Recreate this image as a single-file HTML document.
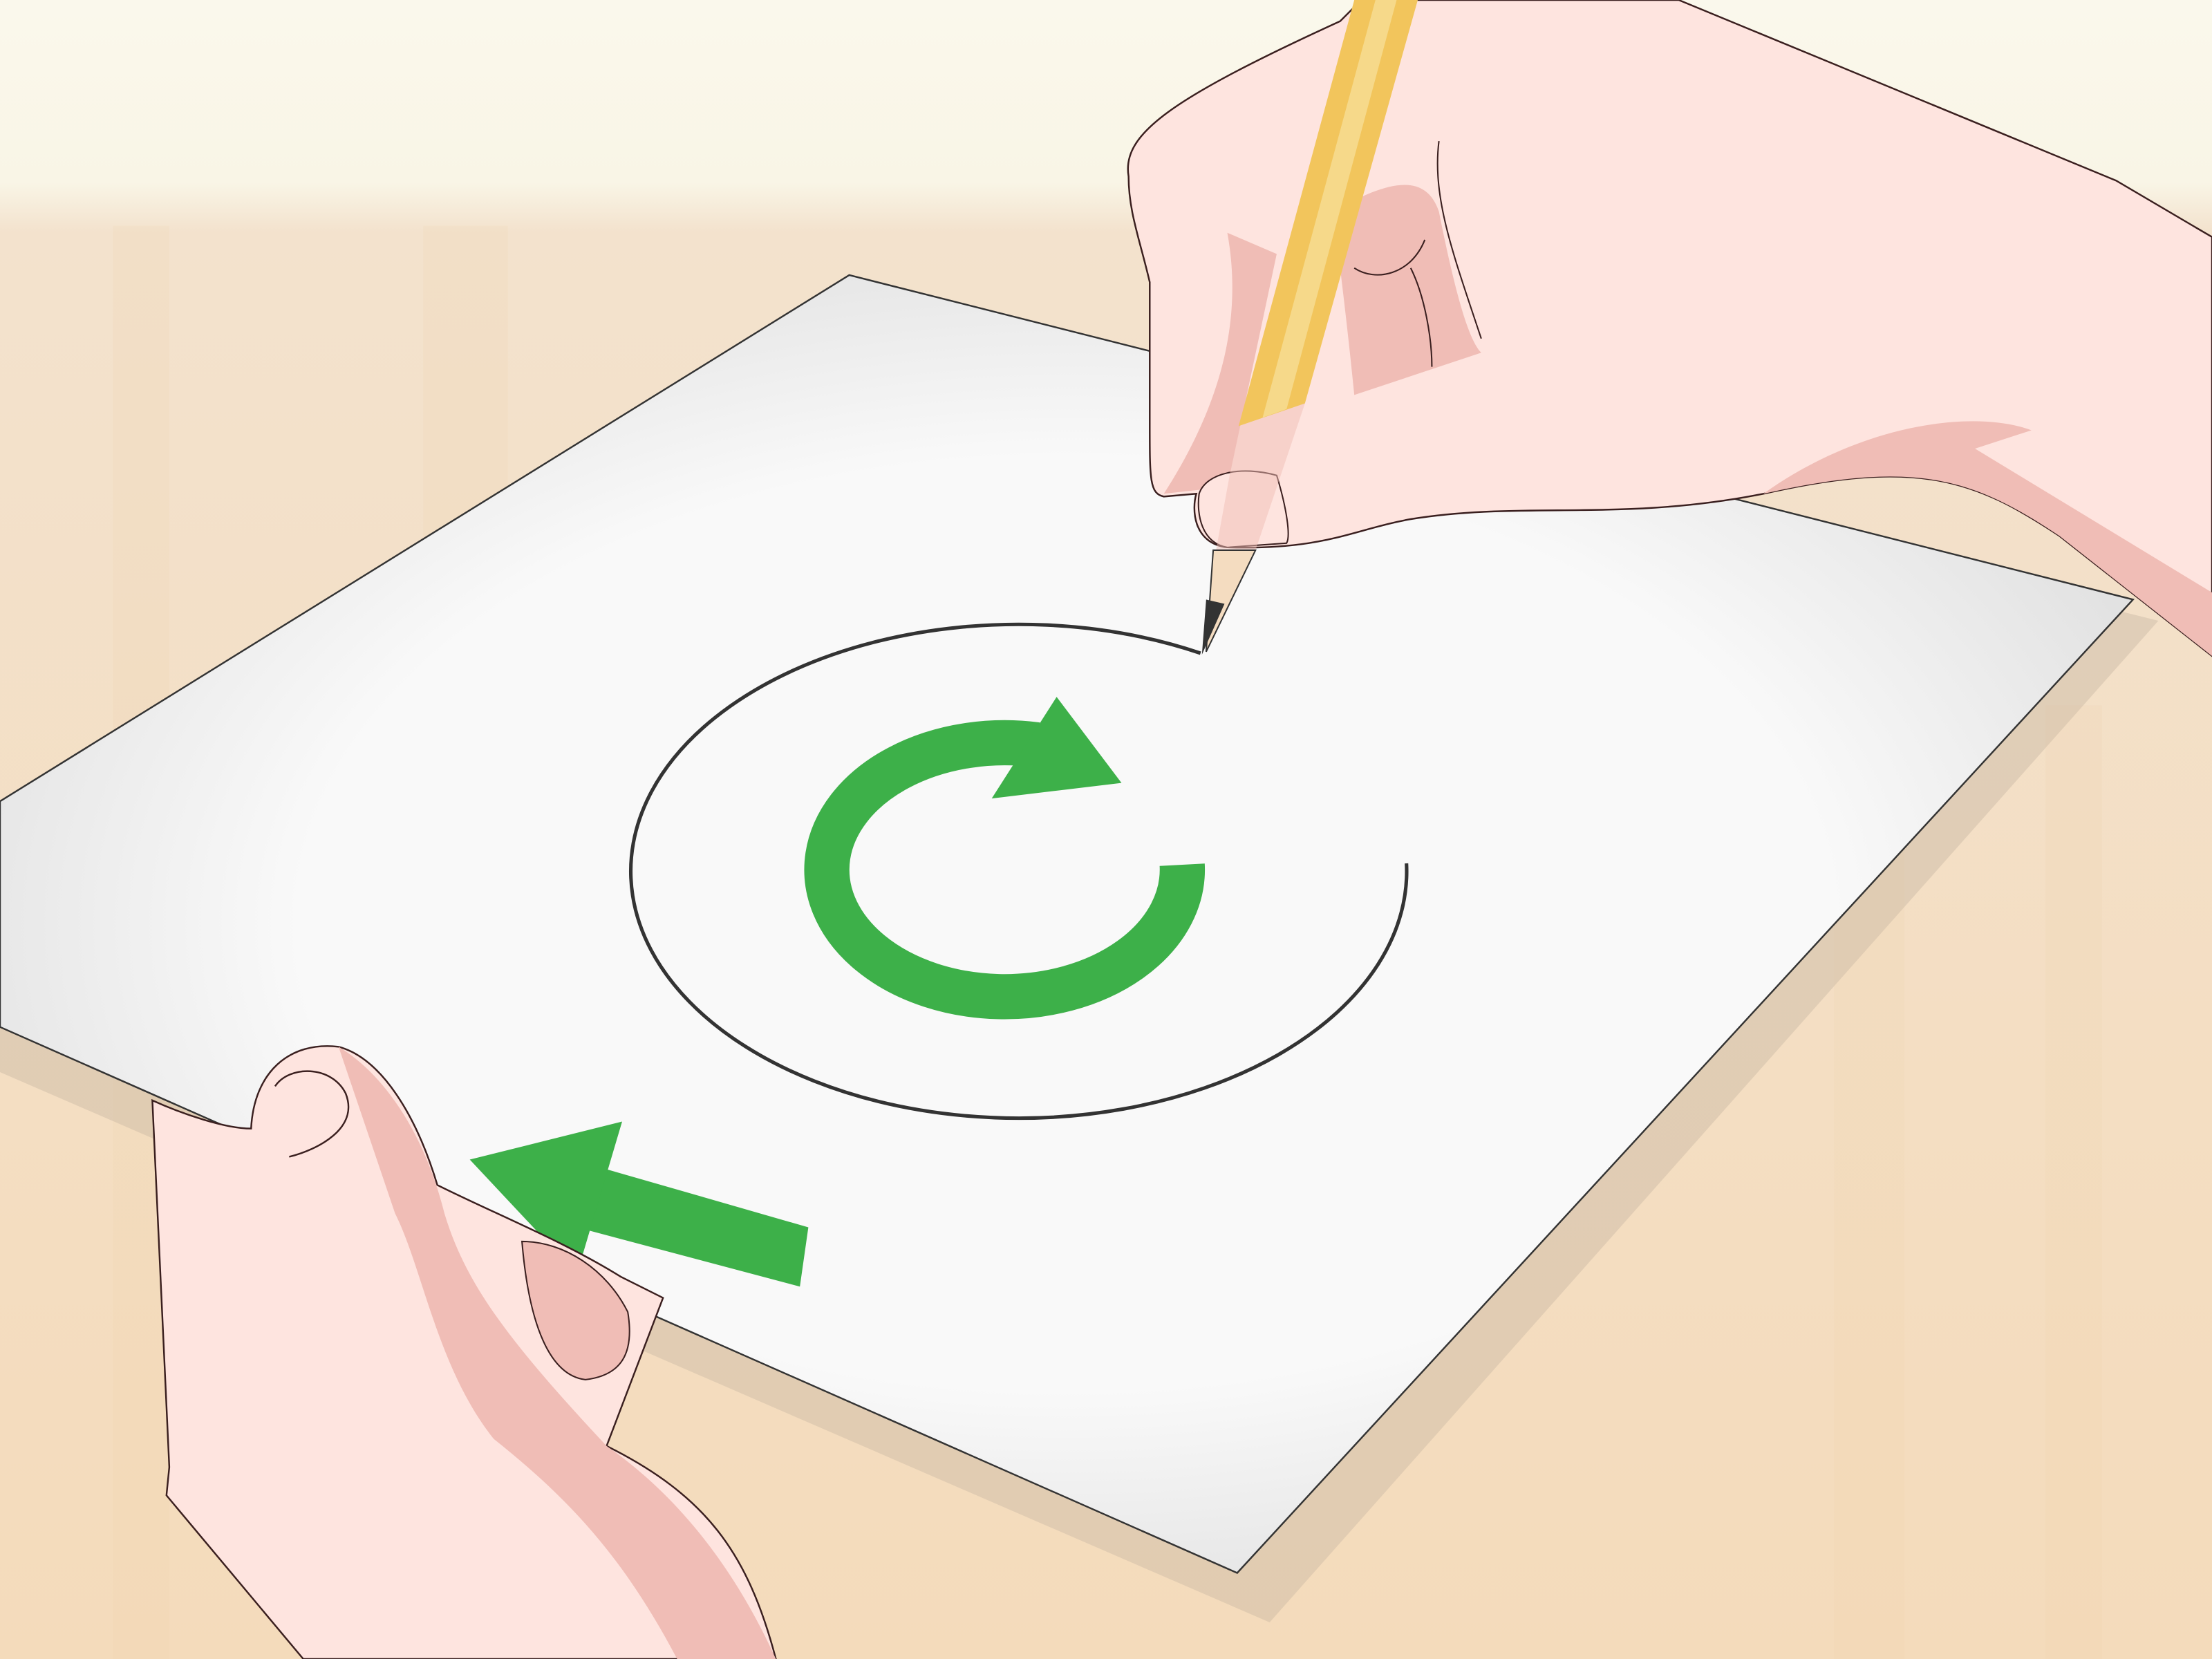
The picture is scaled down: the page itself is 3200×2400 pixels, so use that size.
<!DOCTYPE html>
<html><head><meta charset="utf-8"><style>
html,body{margin:0;padding:0;width:3200px;height:2400px;overflow:hidden;background:#f4dfc6}
svg{display:block}
</style></head><body>
<svg width="3200" height="2400" viewBox="0 0 1568 1176" xmlns="http://www.w3.org/2000/svg">
<defs>
<linearGradient id="bg" x1="0" y1="0" x2="0" y2="1">
<stop offset="0" stop-color="#faf8ec"/><stop offset="0.11" stop-color="#f9f5e6"/>
<stop offset="0.14" stop-color="#f3e2cd"/><stop offset="1" stop-color="#f4dbbb"/>
</linearGradient>
<radialGradient id="pg" cx="0.5" cy="0.5" r="0.6">
<stop offset="0.6" stop-color="#f9f9f9"/><stop offset="1" stop-color="#dcdcdc"/>
</radialGradient>
</defs>
<rect width="1568" height="1176" fill="url(#bg)"/>
<g fill="#f0cfa8" opacity="0.15">
<rect x="80" y="160" width="40" height="1016"/><rect x="300" y="160" width="60" height="1016"/>
<rect x="1300" y="500" width="50" height="676"/><rect x="1450" y="500" width="40" height="676"/>
</g>
<!-- paper shadow -->
<polygon points="602,210 1530,440 900,1150 0,760 0,600" fill="#c9b7a3" opacity="0.45"/>
<!-- paper -->
<polygon points="602,195 1512,425 877,1115 0,728 0,568" fill="url(#pg)" stroke="#333" stroke-width="1.2"/>
<!-- drawn arc -->
<path d="M851,463 A275,175 0 1 0 997,612" fill="none" stroke="#333" stroke-width="2.5"/>
<!-- green circular arrow -->
<path d="M838,613 A126,90 0 1 1 735,528" fill="none" stroke="#3db049" stroke-width="32"/>
<polygon points="749,494 795,555 703,566" fill="#3db049"/>
<!-- green straight arrow -->
<polygon points="573,870 420,826 409,870 567,912" fill="#3db049"/>
<polygon points="333,822 441,795 409,903" fill="#3db049"/>
<!-- right hand -->
<path d="M800,125 C795,95 830,70 950,15 L965,0 L1190,0 L1500,128 L1568,168 L1568,465 L1460,380 C1400,340 1360,325 1250,350 C1150,370 1080,355 1000,368 C960,375 940,390 870,388 C845,385 845,360 848,350 L825,352 C815,350 815,340 815,300 L815,200 C808,170 800,150 800,125 Z" fill="#fee4df" stroke="#3a1f1f" stroke-width="1.2"/>
<path d="M1250,350 C1320,300 1400,290 1440,305 L1400,318 L1568,420 L1568,465 L1460,380 C1400,340 1360,325 1250,350 Z" fill="#f0bdb6"/>
<path d="M870,165 C880,220 870,280 825,350 L870,345 L905,180 Z" fill="#f0bdb6"/>
<path d="M945,150 C980,130 1010,120 1020,150 C1030,200 1040,240 1050,250 L960,280 C955,230 950,190 945,150 Z" fill="#f0bdb6"/>
<path d="M1000,190 C1010,210 1015,240 1015,260 M960,190 C975,200 1000,195 1010,170 M1020,100 C1015,140 1030,180 1050,240" fill="none" stroke="#3a1f1f" stroke-width="1"/>
<path d="M850,350 C855,335 880,330 905,337 C912,360 915,380 912,385 L870,388 C852,385 848,365 850,350 Z" fill="#fee4df" stroke="#3a1f1f" stroke-width="1"/>
<!-- pencil -->
<polygon points="878,302 960,0 1005,0 925,286" fill="#f2c55c"/>
<polygon points="895,296 975,0 990,0 912,290" fill="#f6d98a"/>
<polygon points="862,390 878,302 925,286 890,390" fill="#f0bdb6" opacity="0.5"/>
<polygon points="855,462 860,390 890,390" fill="#f4dcc0" stroke="#333" stroke-width="1"/>
<polygon points="852,464 855,425 868,428" fill="#333"/>
<!-- left hand -->
<path d="M108,780 L120,1040 L118,1060 L215,1176 L550,1176 C530,1100 500,1060 430,1025 L470,920 L440,905 C400,880 350,860 310,840 C295,790 270,750 240,742 C205,738 180,760 178,800 C160,800 130,790 108,780 Z" fill="#fee4df" stroke="#3a1f1f" stroke-width="1.2"/>
<path d="M240,742 C270,760 300,800 315,860 C330,910 360,950 430,1025 C480,1060 520,1110 550,1176 L480,1176 C440,1100 400,1060 350,1020 C310,970 300,900 280,860 Z" fill="#f0bdb6"/>
<path d="M370,880 C400,880 430,900 445,930 C450,960 440,975 415,978 C390,975 375,940 370,880 Z" fill="#f0bdb6" stroke="#3a1f1f" stroke-width="1"/>
<path d="M195,770 C205,755 235,755 245,775 C255,800 225,815 205,820" fill="none" stroke="#3a1f1f" stroke-width="1.2"/>
</svg>
</body></html>
